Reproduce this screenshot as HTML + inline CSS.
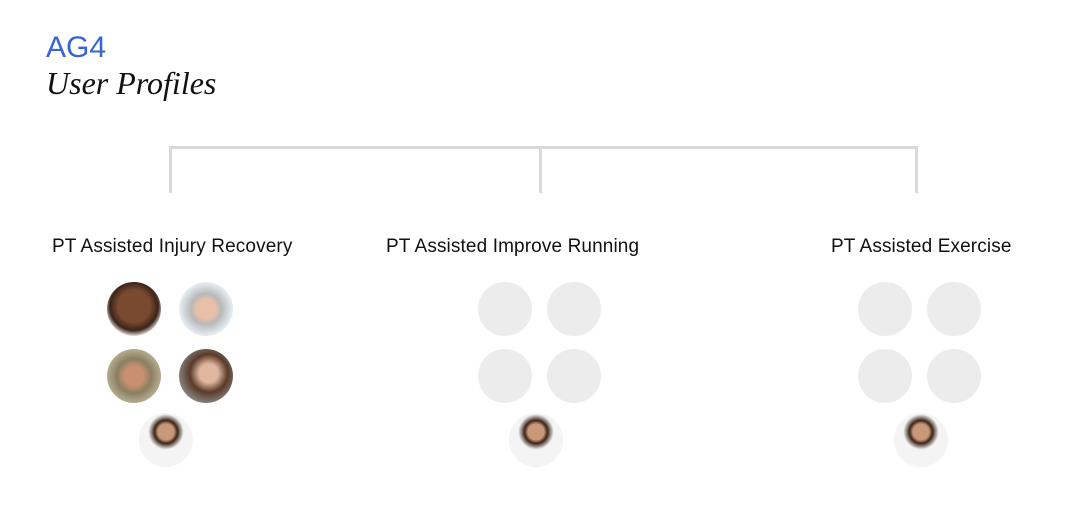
<!DOCTYPE html>
<html><head><style>
body{margin:0;width:1080px;height:514px;background:#fff;position:relative;overflow:hidden;font-family:"Liberation Sans",sans-serif}
.a{position:absolute}
.t{position:absolute;font-size:19px;color:#111;white-space:nowrap;line-height:1;letter-spacing:0.12px}
.c{position:absolute;width:54px;height:54px;border-radius:50%;background:#ececec}
</style></head><body>
<div class="a" style="left:46px;top:33px;font-size:30px;color:#3564d4;line-height:1">AG4</div>
<div class="a" style="left:46px;top:67px;font-size:32px;font-style:italic;font-family:'Liberation Serif',serif;color:#111;line-height:1">User Profiles</div>
<div class="a" style="left:169px;top:146px;width:749px;height:3px;background:#d9d9d9"></div>
<div class="a" style="left:169px;top:146px;width:3px;height:47px;background:#d9d9d9"></div>
<div class="a" style="left:539px;top:146px;width:3px;height:47px;background:#d9d9d9"></div>
<div class="a" style="left:915px;top:146px;width:3px;height:47px;background:#d9d9d9"></div>
<div class="t" style="left:52px;top:237px">PT Assisted Injury Recovery</div>
<div class="t" style="left:386px;top:237px">PT Assisted Improve Running</div>
<div class="t" style="left:831px;top:237px">PT Assisted Exercise</div>

<div class="c" style="left:107px;top:282px;background:radial-gradient(circle at 50% 45%,#7a4a30 0 40%,#3a2418 60%,#eee 75%)"></div>
<div class="c" style="left:179px;top:282px;background:radial-gradient(circle at 50% 50%,#e8c0a8 0 25%,#b8b8b8 40%,#e6eef3 70%)"></div>
<div class="c" style="left:107px;top:349px;background:radial-gradient(circle at 50% 50%,#c89070 0 25%,#8a8060 45%,#bdb39a 75%)"></div>
<div class="c" style="left:179px;top:349px;background:radial-gradient(circle at 55% 45%,#e0b8a0 0 22%,#5a3a28 45%,#8a8a88 75%)"></div>
<div class="c" style="left:139px;top:413px;background:radial-gradient(circle at 50% 35%,#c89878 0 18%,#3a2418 26%,#f4f4f4 40%)"></div>

<div class="c" style="left:478px;top:282px"></div>
<div class="c" style="left:547px;top:282px"></div>
<div class="c" style="left:478px;top:349px"></div>
<div class="c" style="left:547px;top:349px"></div>
<div class="c" style="left:509px;top:413px;background:radial-gradient(circle at 50% 35%,#c89878 0 18%,#3a2418 26%,#f4f4f4 40%)"></div>

<div class="c" style="left:858px;top:282px"></div>
<div class="c" style="left:927px;top:282px"></div>
<div class="c" style="left:858px;top:349px"></div>
<div class="c" style="left:927px;top:349px"></div>
<div class="c" style="left:894px;top:413px;background:radial-gradient(circle at 50% 35%,#c89878 0 18%,#3a2418 26%,#f4f4f4 40%)"></div>
</body></html>
